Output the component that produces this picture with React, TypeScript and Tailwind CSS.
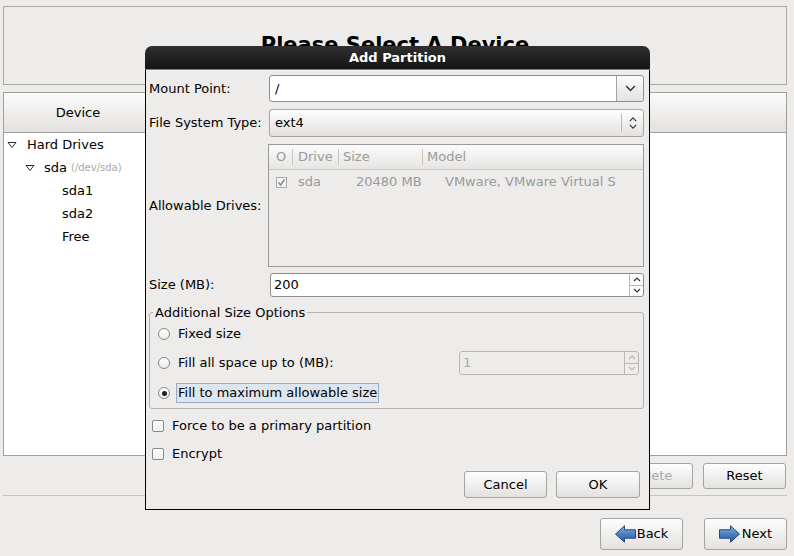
import React from 'react';

const btn =
  'flex items-center justify-center rounded-[3px] border border-[#a5a4a2] bg-gradient-to-b from-[#fdfdfd] to-[#e3e2e0]';

function Expander({ className = '' }: { className?: string }) {
  return (
    <svg width="10" height="8" viewBox="0 0 10 8" className={className}>
      <path d="M1 1.5 L9 1.5 L5 6.5 Z" fill="#fff" stroke="#2e2e2e" strokeWidth="1" strokeLinejoin="round" />
    </svg>
  );
}

function Chevron({ up = false, size = 10 }: { up?: boolean; size?: number }) {
  return (
    <svg width={size} height={size / 2 + 1} viewBox="0 0 10 6">
      <path d={up ? 'M1 5 L5 1 L9 5' : 'M1 1 L5 5 L9 1'} fill="none" stroke="#333" strokeWidth="1.4" />
    </svg>
  );
}

function Arrow({ dir }: { dir: 'left' | 'right' }) {
  return (
    <svg width="21" height="18" viewBox="0 0 21 18">
      <defs>
        <linearGradient id={`ar-${dir}`} x1="0" y1="0" x2="0" y2="1">
          <stop offset="0" stopColor="#8db4e6" />
          <stop offset="0.5" stopColor="#4a7fc4" />
          <stop offset="1" stopColor="#2c5a9c" />
        </linearGradient>
      </defs>
      <path
        d={
          dir === 'left'
            ? 'M0.5 9 L9.5 0.8 L9.5 4.8 L20.5 4.8 L20.5 13.2 L9.5 13.2 L9.5 17.2 Z'
            : 'M20.5 9 L11.5 0.8 L11.5 4.8 L0.5 4.8 L0.5 13.2 L11.5 13.2 L11.5 17.2 Z'
        }
        fill={`url(#ar-${dir})`}
        stroke="#21487f"
        strokeWidth="1"
        strokeLinejoin="round"
      />
    </svg>
  );
}

function Radio({ checked = false }: { checked?: boolean }) {
  return (
    <span className="flex h-[12px] w-[12px] items-center justify-center rounded-full border border-[#8a8988] bg-gradient-to-b from-white to-[#ecebea]">
      {checked && <span className="h-[5px] w-[5px] rounded-full bg-[#1e1e1e]" />}
    </span>
  );
}

function Check() {
  return <span className="h-[12px] w-[12px] rounded-[2px] border border-[#8a8988] bg-gradient-to-b from-white to-[#efeeed]" />;
}

function SpinButtons({ disabled = false }: { disabled?: boolean }) {
  const c = disabled ? '#b8b8b8' : '#333';
  return (
    <div className="flex w-[14px] flex-col border-l border-[#b9b8b6]">
      <div className="flex flex-1 items-center justify-center border-b border-[#b9b8b6]">
        <svg width="8" height="5" viewBox="0 0 8 5">
          <path d="M1 4 L4 1 L7 4" fill="none" stroke={c} strokeWidth="1.2" />
        </svg>
      </div>
      <div className="flex flex-1 items-center justify-center">
        <svg width="8" height="5" viewBox="0 0 8 5">
          <path d="M1 1 L4 4 L7 1" fill="none" stroke={c} strokeWidth="1.2" />
        </svg>
      </div>
    </div>
  );
}

export default function App() {
  return (
    <div className="relative h-[556px] w-[794px] overflow-hidden bg-[#edeceb] font-['DejaVu_Sans',sans-serif] text-[13px] text-black">
      {/* installer page behind the dialog */}
      <div className="ml-[3px] flex w-[784px] flex-col pt-[6px]">
        <div className="flex h-[79px] items-center justify-center border border-[#a9a8a6]">
          <h1 className="text-[21px] font-bold">Please Select A Device</h1>
        </div>

        <div className="mt-[7px] flex h-[364px] flex-col border border-[#a09f9d] bg-white">
          <div className="flex h-[40px] border-b border-[#a09f9d] bg-gradient-to-b from-[#fbfbfb] to-[#e3e1df]">
            <div className="flex w-[148px] items-center justify-center">Device</div>
          </div>
          <div className="flex flex-col">
            <div className="flex h-[23px] items-center">
              <Expander className="ml-[3px]" />
              <span className="ml-[10px]">Hard Drives</span>
            </div>
            <div className="flex h-[23px] items-center">
              <Expander className="ml-[21px]" />
              <span className="ml-[9px]">sda</span>
              <span className="ml-[4px] text-[10px] text-[#a8a8a8]">(/dev/sda)</span>
            </div>
            <div className="flex h-[23px] items-center pl-[58px]">sda1</div>
            <div className="flex h-[23px] items-center pl-[58px]">sda2</div>
            <div className="flex h-[23px] items-center pl-[58px]">Free</div>
          </div>
        </div>

        <div className="mt-[7px] flex justify-end gap-[10px] pr-[1px]">
          <button className={`${btn} h-[26px] w-[84px] text-[#a9a9a9]`}>Delete</button>
          <button className={`${btn} h-[26px] w-[83px]`}>Reset</button>
        </div>

        <div className="mt-[6px] h-px bg-[#c4c3c1]" />

        <div className="mt-[22px] flex justify-end gap-[21px]">
          <button className={`${btn} h-[32px] w-[83px] gap-[1px]`}>
            <Arrow dir="left" />
            <span>Back</span>
          </button>
          <button className={`${btn} h-[32px] w-[83px] gap-[2px] border-[#7d9dc9]`}>
            <Arrow dir="right" />
            <span>Next</span>
          </button>
        </div>
      </div>

      {/* Add Partition dialog */}
      <div className="absolute left-[145px] top-[46px] flex h-[464px] w-[505px] flex-col">
        <div className="flex h-[23px] items-center justify-center rounded-t-[7px] bg-gradient-to-b from-[#303030] to-[#141414] font-bold text-white">
          Add Partition
        </div>
        <div className="h-px bg-[#6483ad]" />
        <div className="flex flex-1 flex-col border-x border-b border-black bg-[#edeceb] pl-[3px] pr-[5px]">
          <div className="mt-[5px] grid grid-cols-[120px_1fr] items-center gap-y-0">
            <span>Mount Point:</span>
            <div className="flex h-[27px] rounded-[3px] border border-[#8e8d8b] bg-white">
              <span className="flex flex-1 items-center pl-[5px]">/</span>
              <div className="flex w-[27px] items-center justify-center rounded-r-[3px] border-l border-[#a5a4a2] bg-gradient-to-b from-[#fbfbfb] to-[#e4e3e1]">
                <Chevron size={11} />
              </div>
            </div>
          </div>

          <div className="mt-[7px] grid grid-cols-[120px_1fr] items-center">
            <span>File System Type:</span>
            <div className={`${btn} h-[28px] justify-start`}>
              <span className="flex-1 pl-[5px]">ext4</span>
              <div className="h-[18px] w-px bg-[#bab9b7]" />
              <div className="flex w-[21px] flex-col items-center justify-center gap-[2px]">
                <Chevron up size={8} />
                <Chevron size={8} />
              </div>
            </div>
          </div>

          <div className="mt-[7px] grid grid-cols-[119px_1fr] items-center">
            <span>Allowable Drives:</span>
            <div className="flex h-[123px] flex-col border border-[#9b9a98] text-[#9a9a9a]">
              <div className="flex h-[25px] items-center border-b border-[#c9c8c6] bg-gradient-to-b from-[#fbfbfb] to-[#e6e5e3]">
                <span className="w-[23px] pl-[7px]">O</span>
                <span className="h-[16px] w-px bg-[#c6c5c3]" />
                <span className="w-[45px] pl-[5px]">Drive</span>
                <span className="h-[16px] w-px bg-[#c6c5c3]" />
                <span className="w-[83px] pl-[4px]">Size</span>
                <span className="h-[16px] w-px bg-[#c6c5c3]" />
                <span className="pl-[4px]">Model</span>
              </div>
              <div className="flex h-[24px] items-center">
                <span className="ml-[7px] flex h-[11px] w-[11px] items-center justify-center border border-[#a9a8a6] bg-[#f4f4f4]">
                  <svg width="9" height="9" viewBox="0 0 9 9">
                    <path d="M1.5 4.5 L3.6 7 L7.5 1.5" fill="none" stroke="#8a8a8a" strokeWidth="1.5" />
                  </svg>
                </span>
                <span className="ml-[11px] w-[58px]">sda</span>
                <span className="w-[89px]">20480 MB</span>
                <span>VMware, VMware Virtual S</span>
              </div>
            </div>
          </div>

          <div className="mt-[6px] grid grid-cols-[121px_1fr] items-center">
            <span>Size (MB):</span>
            <div className="flex h-[24px] rounded-[3px] border border-[#8e8d8b] bg-white">
              <span className="flex flex-1 items-center pl-[3px]">200</span>
              <SpinButtons />
            </div>
          </div>

          <fieldset className="mt-[8px] rounded-[3px] border border-[#b2b1af] pb-0 pl-[8px] pr-[4px]">
            <legend className="-ml-[5px] px-[2px] leading-[15px]">Additional Size Options</legend>
            <div className="flex h-[28px] items-center gap-[6px]">
              <Radio />
              <span className="border border-transparent px-[1px]">Fixed size</span>
            </div>
            <div className="flex h-[30px] items-center gap-[6px]">
              <Radio />
              <span className="border border-transparent px-[1px]">Fill all space up to (MB):</span>
              <div className="ml-auto flex h-[24px] w-[180px] rounded-[3px] border border-[#b8b7b5] bg-[#edeceb] text-[#a9a9a9]">
                <span className="flex flex-1 items-center pl-[3px]">1</span>
                <SpinButtons disabled />
              </div>
            </div>
            <div className="flex h-[30px] items-center gap-[6px]">
              <Radio checked />
              <span className="border border-[#9aabc4] bg-[#dde5ef] px-[1px] leading-[18px]">
                Fill to maximum allowable size
              </span>
            </div>
          </fieldset>

          <div className="mt-[3px] flex h-[28px] items-center gap-[8px] pl-[3px]">
            <Check />
            <span>Force to be a primary partition</span>
          </div>
          <div className="flex h-[28px] items-center gap-[8px] pl-[3px]">
            <Check />
            <span>Encrypt</span>
          </div>

          <div className="mr-[4px] mt-[3px] flex justify-end gap-[9px]">
            <button className={`${btn} h-[27px] w-[83px]`}>Cancel</button>
            <button className={`${btn} h-[27px] w-[84px]`}>OK</button>
          </div>
        </div>
      </div>
    </div>
  );
}
